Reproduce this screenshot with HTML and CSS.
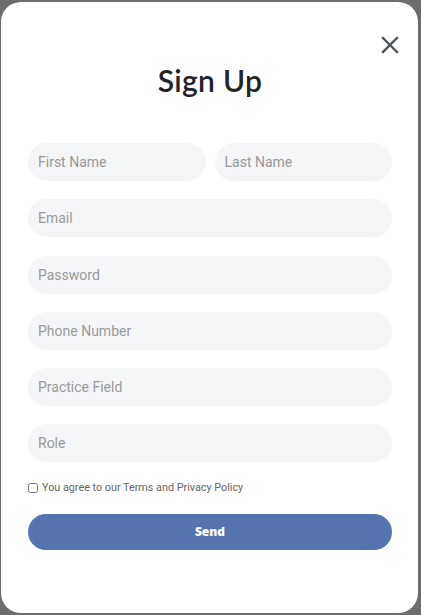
FILE: index.html
```html
<!DOCTYPE html>
<html>
<head>
<meta charset="utf-8">
<link rel="stylesheet" href="styles.css">
</head>
<body>
<div class="backdrop">
  <div class="modal">
    <button class="close" aria-label="Close">
      <svg width="18" height="18" viewBox="0 0 18 18"><path d="M2 2L16 16M16 2L2 16" stroke="#50555c" stroke-width="2.4" stroke-linecap="square"/></svg>
    </button>
    <h1 class="title">Sign Up</h1>
    <form class="form">
      <div class="row two">
        <input class="field" placeholder="First Name">
        <input class="field" placeholder="Last Name">
      </div>
      <input class="field" placeholder="Email">
      <input class="field" placeholder="Password">
      <input class="field" placeholder="Phone Number">
      <input class="field" placeholder="Practice Field">
      <input class="field" placeholder="Role">
      <label class="agree"><input type="checkbox" class="check"><span>You agree to our Terms and Privacy Policy</span></label>
      <button type="button" class="send">Send</button>
    </form>
  </div>
</div>
</body>
</html>
```
FILE: styles.css
```css
html, body { margin: 0; padding: 0; }
body { background: #6d6d6d; width: 421px; height: 615px; overflow: hidden; }
.backdrop { padding: 2px 3px 2px 1px; }
.modal {
  position: relative;
  box-sizing: border-box;
  width: 417px;
  height: 611px;
  background: #fff;
  border-radius: 20px;
  padding: 58px 26px 0 27px;
}
.close {
  position: absolute;
  top: 31px; right: 16px;
  width: 24px; height: 24px;
  padding: 0; border: 0; background: none;
  display: flex; align-items: center; justify-content: center;
}
.title {
  margin: 0;
  text-align: center;
  font-family: Lato, "Open Sans", sans-serif;
  font-weight: 600;
  font-size: 30px;
  line-height: 40px;
  color: #222428;
  letter-spacing: 0.3px;
}
.form {
  margin-top: 43px;
  display: flex;
  flex-direction: column;
  gap: 18.25px;
}
.row.two { display: flex; gap: 9px; }
.row.two .field { flex: 1; min-width: 0; }
.field {
  box-sizing: border-box;
  height: 38px;
  border: 0;
  border-radius: 19px;
  background: #f4f5f7;
  padding: 0 10px;
  font-family: Roboto, sans-serif;
  font-size: 14px;
  color: #333;
  outline: none;
}
.field::placeholder { color: #9a9a9a; }
.agree {
  display: flex;
  align-items: center;
  gap: 4px;
  margin-top: 0;
  font-family: Roboto, sans-serif;
  font-size: 10.8px;
  color: #666;
  height: 14px;
}
.check { margin: 0; width: 10px; height: 10px; }
.send {
  margin-top: 1px;
  height: 36px;
  border: 0;
  border-radius: 18px;
  background: #5574b0;
  color: #fff;
  font-family: "Open Sans", sans-serif;
  font-weight: 800;
  font-size: 12px;
}
```
